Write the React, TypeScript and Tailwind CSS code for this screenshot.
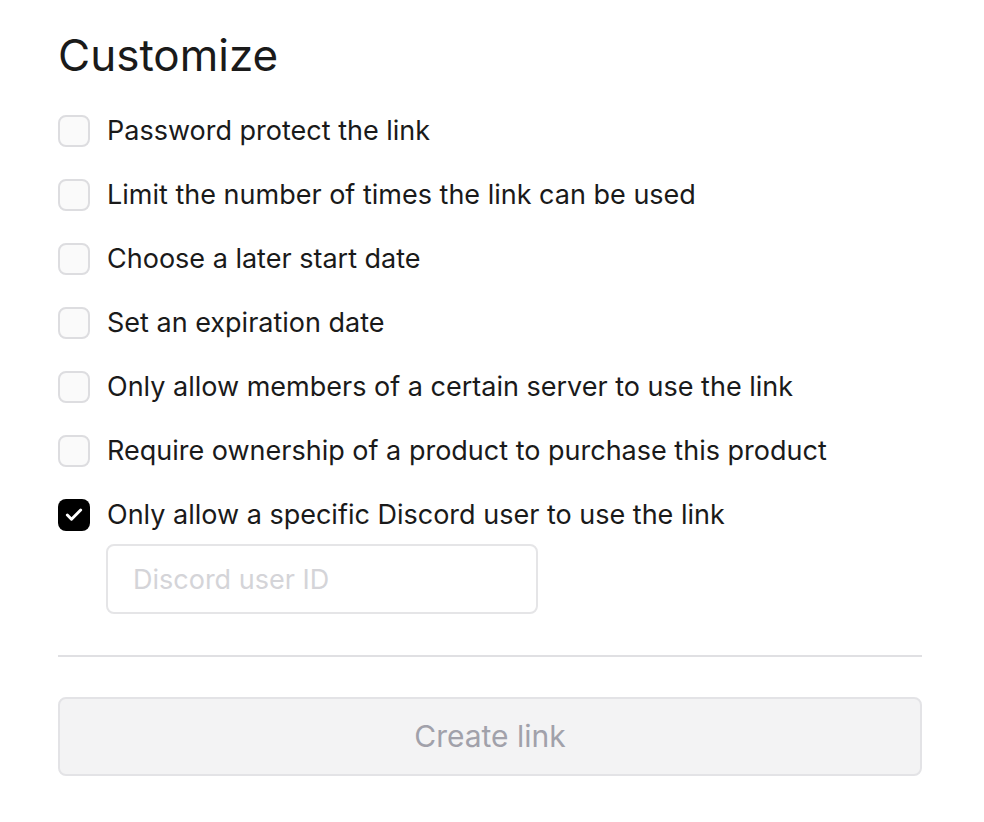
import { Check } from "lucide-react";

const options = [
  { label: "Password protect the link", checked: false },
  { label: "Limit the number of times the link can be used", checked: false },
  { label: "Choose a later start date", checked: false },
  { label: "Set an expiration date", checked: false },
  { label: "Only allow members of a certain server to use the link", checked: false },
  { label: "Require ownership of a product to purchase this product", checked: false },
  { label: "Only allow a specific Discord user to use the link", checked: true },
];

const Box = ({ checked }: { checked: boolean }) =>
  checked ? (
    <span className="flex justify-center items-center bg-black rounded-[8px] w-8 h-8 shrink-0">
      <Check className="w-5 h-5 text-white" strokeWidth={3.5} />
    </span>
  ) : (
    <span className="bg-[#fafafa] border-2 border-[#dddde0] rounded-[8px] w-8 h-8 shrink-0" />
  );

export default function App() {
  return (
    <div
      className="bg-white pt-[31px] pr-[62px] pl-[58px] w-[984px] h-[822px] text-[#1a1a1a]"
      style={{ fontFamily: "Inter, 'Noto Sans', sans-serif" }}
    >
      <h1 className="mb-[36px] text-[44px] leading-[48px]">Customize</h1>
      <div className="flex flex-col gap-8">
        {options.map((o) => (
          <label key={o.label} className="flex items-center gap-[17px] h-8 text-[27px]">
            <Box checked={o.checked} />
            <span>{o.label}</span>
          </label>
        ))}
      </div>
      <div className="mt-[13px] ml-[48px]">
        <input
          placeholder="Discord user ID"
          className="px-[25px] border-2 border-[#e5e5e7] rounded-[8px] w-[432px] h-[70px] text-[27px] placeholder:text-[#d4d4d8] outline-none"
        />
      </div>
      <hr className="mt-[41px] border-[#e0e0e3] border-t-2" />
      <button className="flex justify-center items-center bg-[#f3f3f4] mt-[40px] border-2 border-[#e3e3e6] rounded-[8px] w-full h-[79px] text-[#a1a1aa] text-[30px]">
        Create link
      </button>
    </div>
  );
}
